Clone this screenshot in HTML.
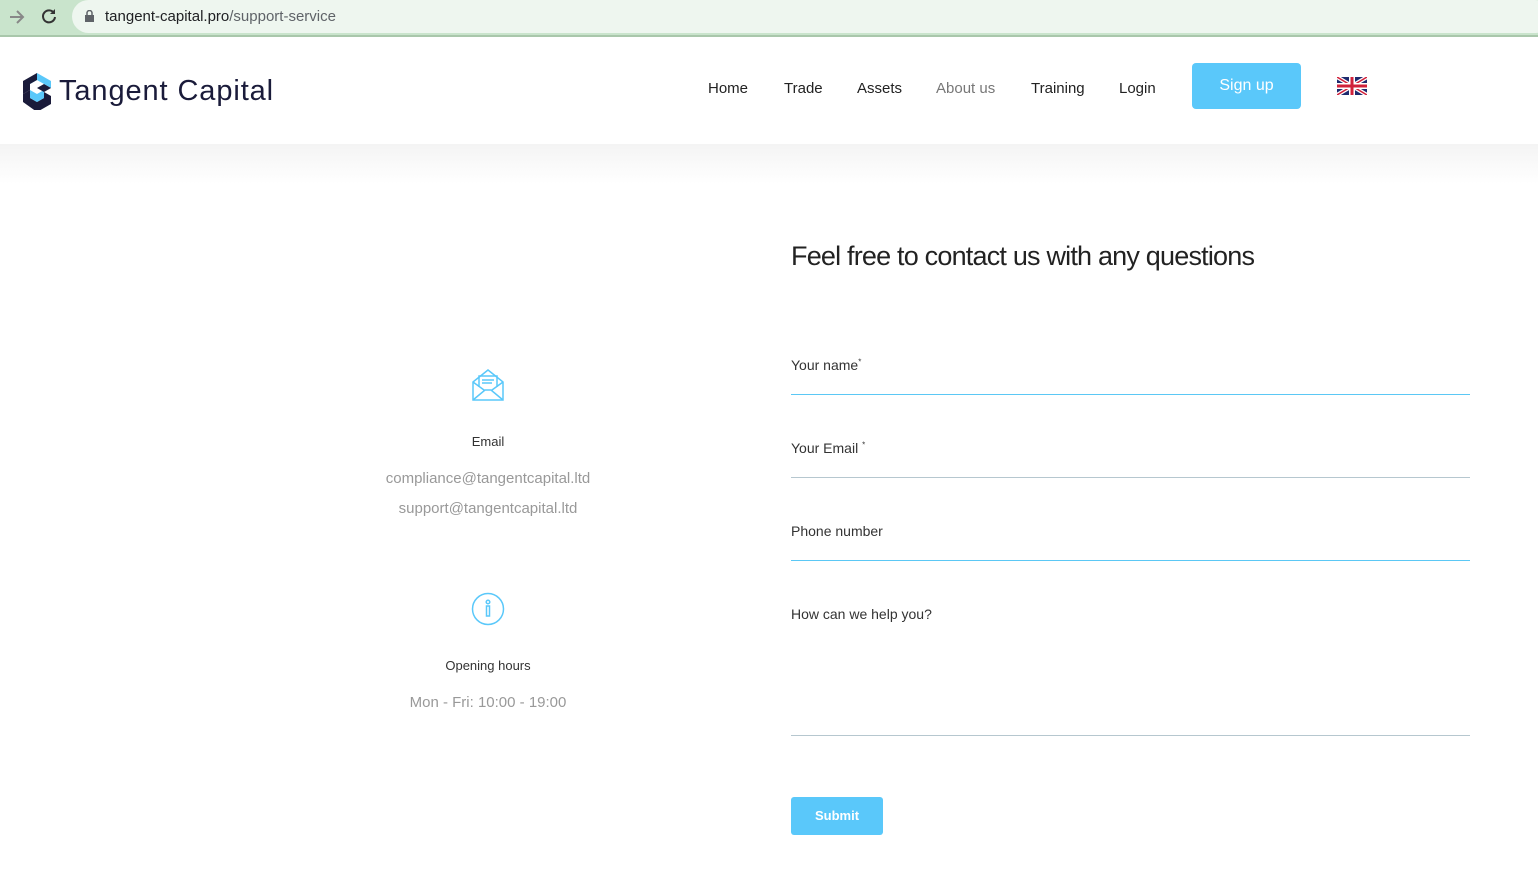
<!DOCTYPE html>
<html><head><meta charset="utf-8"><style>
*{margin:0;padding:0;box-sizing:border-box}
body{width:1538px;height:873px;overflow:hidden;background:#fff;font-family:"Liberation Sans",sans-serif;position:relative;color:#222}
.bar{position:absolute;left:0;top:0;width:1538px;height:37px;background:#c9e4cc;border-bottom:2px solid #a9c7ab}
.url{position:absolute;left:72px;top:0;width:1480px;height:33px;background:#eef6ef;border-radius:17px}
.url span{position:absolute;left:33px;top:8px;font-size:15px;color:#202124}
.nav{position:absolute;top:80px;font-size:15px;color:#222}
.shadow{position:absolute;left:0;top:144px;width:1538px;height:40px;background:linear-gradient(#f4f4f4,#fff)}
.field{position:absolute;left:791px;width:679px;border-bottom:1px solid #5bc8f5;font-size:14px;color:#333}
.c{position:absolute;text-align:center;width:300px;left:338px}
</style></head><body>
<div class="bar"><div class="url"><span><span style="position:static;color:#202124">tangent-capital.pro</span><span style="position:static;color:#5f6368">/support-service</span></span>
<svg style="position:absolute;left:13px;top:10px" width="9" height="12"><rect x="0" y="5" width="9" height="7" fill="#5f6368"/><path d="M2 5V3a2.5 2.5 0 0 1 5 0v2" stroke="#5f6368" fill="none" stroke-width="1.5"/></svg></div>
<svg style="position:absolute;left:8px;top:8px" width="18" height="18"><path d="M2 9h13M9 3l6 6-6 6" stroke="#888" stroke-width="2" fill="none"/></svg>
<svg style="position:absolute;left:40px;top:7px" width="18" height="18"><path d="M14 6A6 6 0 1 0 15 10" stroke="#333" stroke-width="2" fill="none"/><path d="M15 2v5h-5z" fill="#333"/></svg>
</div>
<svg style="position:absolute;left:22px;top:72px" width="30" height="38" viewBox="0 0 30 38"><path d="M15 1L29 9v7L15 8 8 12z" fill="#5ac8fa"/><path d="M1 9l14-8v7L8 12v6L1 22z" fill="#1a1b3a"/><path d="M1 22l7-4v8l7 4 7-4v-6l7 4v8l-14 8L1 30z" fill="#1a1b3a"/><path d="M8 18l7 4 7-4v8l-7 4-7-4z" fill="#5ac8fa"/><path d="M15 16l7-4 7 4-7 4z" fill="#1a1b3a"/></svg>
<div style="position:absolute;left:59px;top:75px;font-size:29px;color:#1a1b3a;letter-spacing:0.9px">Tangent Capital</div>
<div class="nav" style="left:708px">Home</div>
<div class="nav" style="left:784px">Trade</div>
<div class="nav" style="left:857px">Assets</div>
<div class="nav" style="left:936px;color:#777">About us</div>
<div class="nav" style="left:1031px">Training</div>
<div class="nav" style="left:1119px">Login</div>
<div style="position:absolute;left:1192px;top:63px;width:109px;height:46px;background:#5ac8fa;border-radius:4px;color:#fff;font-size:16px;text-align:center;line-height:46px">Sign up</div>
<svg style="position:absolute;left:1337px;top:77px" width="30" height="18" viewBox="0 0 30 18"><rect width="30" height="18" fill="#1e2a6e" rx="2"/><path d="M0 0L30 18M30 0L0 18" stroke="#fff" stroke-width="4"/><path d="M0 0L30 18M30 0L0 18" stroke="#d0203a" stroke-width="1.5"/><path d="M15 0v18M0 9h30" stroke="#fff" stroke-width="6"/><path d="M15 0v18M0 9h30" stroke="#d0203a" stroke-width="3"/></svg>
<div class="shadow"></div>
<div style="position:absolute;left:791px;top:241px;font-size:27px;color:#222;letter-spacing:-0.8px">Feel free to contact us with any questions</div>
<div class="field" style="top:357px;height:38px">Your name<sup style="font-size:8px">*</sup></div>
<div class="field" style="top:440px;height:38px;border-color:#b6c7cf">Your Email <sup style="font-size:8px">*</sup></div>
<div class="field" style="top:523px;height:38px">Phone number</div>
<div class="field" style="top:606px;height:130px;border-color:#b6c7cf">How can we help you?</div>
<div style="position:absolute;left:791px;top:797px;width:92px;height:38px;background:#5ac8fa;border-radius:3px;color:#fff;font-size:13px;font-weight:bold;text-align:center;line-height:38px">Submit</div>
<svg style="position:absolute;left:471px;top:368px" width="34" height="34" viewBox="0 0 34 34" fill="none" stroke="#5ac8fa" stroke-width="1.5"><path d="M2 14L17 2l15 12v18H2z"/><path d="M2 32l12-10h6l12 10M2 14l11 8M32 14l-11 8"/><path d="M8 19V8h18v11"/><path d="M11 12h12M11 15h10"/></svg>
<div class="c" style="top:434px;font-size:13px;color:#333">Email</div>
<div class="c" style="top:470px;font-size:15px;color:#999">compliance@tangentcapital.ltd</div>
<div class="c" style="top:500px;font-size:15px;color:#999">support@tangentcapital.ltd</div>
<svg style="position:absolute;left:471px;top:592px" width="34" height="34" viewBox="0 0 34 34" fill="none" stroke="#5ac8fa" stroke-width="1.5"><circle cx="17" cy="17" r="15.5"/><circle cx="17" cy="10" r="1.8"/><rect x="15.5" y="14" width="3" height="10"/></svg>
<div class="c" style="top:658px;font-size:13px;color:#333">Opening hours</div>
<div class="c" style="top:694px;font-size:15px;color:#999">Mon - Fri: 10:00 - 19:00</div>
</body></html>
